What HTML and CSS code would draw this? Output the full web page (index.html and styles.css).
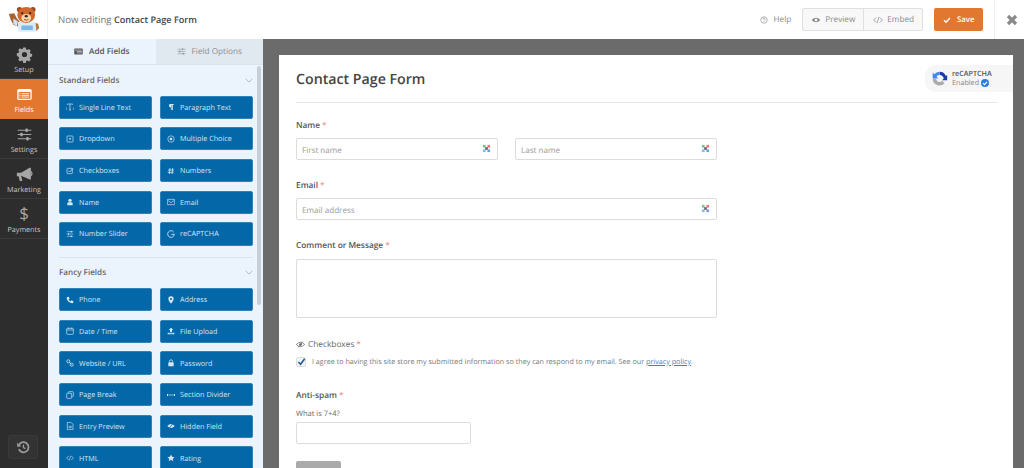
FILE: index.html
```html
<!DOCTYPE html>
<html lang="en">
<head>
<meta charset="utf-8">
<title>Now editing Contact Page Form</title>
<link rel="stylesheet" href="styles.css">
</head>
<body>
<header class="topbar">
  <div class="logo">
    <svg viewBox="0 0 36 30" width="32" height="27">
      <path d="M1 10l6-1 3 6 3 3-2 6-5-2-3-6z" fill="#a8622f"/>
      <path d="M6 15l5 3-1 6-4-3z" fill="#cfe6f6"/>
      <path d="M11 19h20l3 7-3 4H12z" fill="#d9ecf8"/>
      <path d="M31 20l3 1 1 5-3 3z" fill="#b5793c"/>
      <rect x="15" y="23" width="13" height="5" rx="1" fill="#7fb7e0"/>
      <circle cx="13" cy="5" r="3" fill="#9c4a24"/>
      <circle cx="28" cy="5" r="3" fill="#9c4a24"/>
      <ellipse cx="20.500" cy="11" rx="10" ry="9" fill="#d0682c"/>
      <ellipse cx="20.500" cy="14.500" rx="5.500" ry="4.500" fill="#f6d6a8"/>
      <circle cx="16" cy="9" r="1.200" fill="#3a2415"/>
      <circle cx="25" cy="9" r="1.200" fill="#3a2415"/>
      <ellipse cx="20.500" cy="12.500" rx="2" ry="1.300" fill="#3a2415"/>
      <path d="M18 16q2.500 2 5 0" stroke="#8b3c20" stroke-width="1" fill="none"/>
    </svg>
  </div>
  <div class="editing">Now editing <strong>Contact Page Form</strong></div>
  <div class="actions">
    <span class="help"><svg class="ic" viewBox="0 0 16 16"><circle cx="8" cy="8" r="6.500" fill="none" stroke="currentColor" stroke-width="1.300"/><path d="M6 6.300a2 2 0 1 1 3 1.800c-.7.400-1 .8-1 1.600" fill="none" stroke="currentColor" stroke-width="1.300"/><circle cx="8" cy="11.700" r=".9" fill="currentColor"/></svg>Help</span>
    <div class="btn-group">
      <span class="group-btn"><svg class="ic" viewBox="0 0 16 16"><path d="M1 8q7-7.500 14 0-7 7.500-14 0z" fill="currentColor"/><circle cx="8" cy="8" r="2.200" fill="#f8f8f8"/></svg>Preview</span>
      <span class="group-btn"><svg class="ic" viewBox="0 0 16 16"><path d="M5 4L1 8l4 4M11 4l4 4-4 4M9.500 3l-3 10" fill="none" stroke="currentColor" stroke-width="1.200"/></svg>Embed</span>
    </div>
    <span class="save"><svg class="ic" viewBox="0 0 16 16"><path d="M2 8.500l4 4 8-8.500" fill="none" stroke="currentColor" stroke-width="2.600"/></svg>Save</span>
  </div>
  <div class="close"><svg viewBox="0 0 12 12" width="12" height="12"><path d="M2 2l8 8M10 2l-8 8" stroke="#8a8a8a" stroke-width="3.200"/></svg></div>
</header>

<div class="workspace">
  <nav class="sidebar">
    <a class="nav-item"><svg class="nav-ic" viewBox="0 0 20 20"><path fill="currentColor" fill-rule="evenodd" d="M8.300 1h3.400l.5 2.400 1.600.7 2.100-1.300 2.300 2.300-1.300 2.100.7 1.600 2.400.5v3.400l-2.400.5-.7 1.600 1.300 2.100-2.300 2.300-2.100-1.300-1.600.7-.5 2.400H8.300l-.5-2.400-1.600-.7-2.100 1.300-2.300-2.300 1.300-2.100-.7-1.600L0 11.700V8.300l2.400-.5.7-1.600-1.300-2.100 2.300-2.300 2.100 1.300 1.600-.7zM10 6.600a3.400 3.400 0 1 0 0 6.800 3.400 3.400 0 0 0 0-6.800z" transform="translate(1 1) scale(.9)"/></svg>Setup</a>
    <a class="nav-item is-active"><svg class="nav-ic" viewBox="0 0 20 16"><rect width="17" height="13" x="1.500" y="1.500" rx="2" fill="#fff"/><rect x="3" y="5" width="14" height="8" fill="#e27730"/><path d="M6.500 7h9M6.500 9h9M6.500 11h9M3.800 7h1.500M3.800 9h1.500M3.800 11h1.500" stroke="#fff" stroke-width="1"/></svg>Fields</a>
    <a class="nav-item"><svg class="nav-ic" viewBox="0 0 20 16"><path d="M2 3h16M2 8h16M2 13h16" stroke="currentColor" stroke-width="1.400"/><rect x="11" y="1" width="3" height="4" rx="1" fill="currentColor"/><rect x="5" y="6" width="3" height="4" rx="1" fill="currentColor"/><rect x="12" y="11" width="3" height="4" rx="1" fill="currentColor"/></svg>Settings</a>
    <a class="nav-item"><svg class="nav-ic" viewBox="0 0 20 18"><path fill="currentColor" d="M1 7h5l10-6h1.500v14H16L6 10.500l1.500 6H4.500L3 11H1z"/><path d="M17.500 5.500q2.500 2.500 0 5" stroke="currentColor" fill="none" stroke-width="1.400"/></svg>Marketing</a>
    <a class="nav-item nav-pay"><span class="dollar">$</span>Payments</a>
    <span class="history"><svg viewBox="0 0 16 16" width="14" height="14"><path d="M3 6.500a5.800 5.800 0 1 1 .2 4" fill="none" stroke="#9a9a9a" stroke-width="2"/><path d="M1 3l.6 5 4.600-1z" fill="#9a9a9a"/><path d="M8.500 5v3.600l2.300 1.300" fill="none" stroke="#9a9a9a" stroke-width="1.500"/></svg></span>
  </nav>

  <aside class="panel">
    <div class="tabs">
      <span class="tab is-current"><svg class="ic" viewBox="0 0 16 12"><rect x=".5" y=".5" width="15" height="11" rx="1.500" fill="currentColor"/><path d="M2 3.500h12M5 6h9M5 8.500h9" stroke="#ebf3fc"/></svg>Add Fields</span>
      <span class="tab"><svg class="ic" viewBox="0 0 16 12"><path d="M1 2h14M1 6h14M1 10h14" stroke="currentColor"/><rect x="9" y=".5" width="2" height="3" fill="currentColor"/><rect x="4" y="4.500" width="2" height="3" fill="currentColor"/><rect x="10" y="8.500" width="2" height="3" fill="currentColor"/></svg>Field Options</span>
    </div>
    <section class="group">
      <h3 class="group-title">Standard Fields<svg class="chev" viewBox="0 0 10 6"><path d="M1 1l4 4 4-4" fill="none" stroke="currentColor" stroke-width="1"/></svg></h3>
      <div class="grid">
        <a class="field"><svg class="ic" viewBox="0 0 12 12"><path d="M2 2.500V1.500h8v1M6 1.500v9M4.500 10.500h3M1 7l-.5 1.500L1 10M11 7l.5 1.500L11 10" fill="none" stroke="currentColor"/></svg>Single Line Text</a>
        <a class="field"><svg class="ic" viewBox="0 0 12 12"><path d="M5 1.500h5v1.500H9v7.500H7.800V3H7v7.500H5.800V6.500A2.500 2.500 0 0 1 5 1.500z" fill="currentColor"/></svg>Paragraph Text</a>
        <a class="field"><svg class="ic" viewBox="0 0 12 12"><rect x="1.500" y="1.500" width="9" height="9" rx="1" fill="none" stroke="currentColor"/><path d="M4 5h4L6 7.500z" fill="currentColor"/></svg>Dropdown</a>
        <a class="field"><svg class="ic" viewBox="0 0 12 12"><circle cx="6" cy="6" r="4.800" fill="none" stroke="currentColor"/><circle cx="6" cy="6" r="2" fill="currentColor"/></svg>Multiple Choice</a>
        <a class="field"><svg class="ic" viewBox="0 0 12 12"><rect x="1.500" y="2" width="8" height="8" rx="1" fill="none" stroke="currentColor"/><path d="M3.500 5.500l2 2 5-5.500" fill="none" stroke="currentColor" stroke-width="1.200"/></svg>Checkboxes</a>
        <a class="field"><svg class="ic" viewBox="0 0 12 12"><path d="M4.500 1.500l-1 9M8.500 1.500l-1 9M1.500 4.500h9M1 8h9" fill="none" stroke="currentColor" stroke-width="1.200"/></svg>Numbers</a>
        <a class="field"><svg class="ic" viewBox="0 0 12 12"><circle cx="6" cy="3.500" r="2.500" fill="currentColor"/><path d="M2 11V8.500Q2 6.500 4 6.500h4Q10 6.500 10 8.500V11z" fill="currentColor"/></svg>Name</a>
        <a class="field"><svg class="ic" viewBox="0 0 12 12"><rect x=".5" y="2" width="11" height="8" rx="1" fill="none" stroke="currentColor"/><path d="M1 3.500l5 3.500 5-3.500" fill="none" stroke="currentColor"/></svg>Email</a>
        <a class="field"><svg class="ic" viewBox="0 0 12 12"><path d="M1 2.500h10M1 6h10M1 9.500h10" stroke="currentColor" stroke-width=".8"/><rect x="7" y="1.300" width="1.600" height="2.400" fill="currentColor"/><rect x="3" y="4.800" width="1.600" height="2.400" fill="currentColor"/><rect x="7" y="8.300" width="1.600" height="2.400" fill="currentColor"/></svg>Number Slider</a>
        <a class="field"><svg class="ic" viewBox="0 0 12 12"><path d="M10 3a5 5 0 1 0 1 3.500H6.500" fill="none" stroke="currentColor" stroke-width="1.300"/></svg>reCAPTCHA</a>
      </div>
    </section>
    <section class="group group-fancy">
      <h3 class="group-title">Fancy Fields<svg class="chev" viewBox="0 0 10 6"><path d="M1 1l4 4 4-4" fill="none" stroke="currentColor" stroke-width="1"/></svg></h3>
      <div class="grid">
        <a class="field"><svg class="ic" viewBox="0 0 12 12"><path d="M2 1.500l2-.5 1.500 3L4 5.200Q5 7.500 7 8l1.200-1.500 3 1.500-.5 2Q10 11 9 11 2 9.500 1 3q0-1 1-1.500z" fill="currentColor"/></svg>Phone</a>
        <a class="field"><svg class="ic" viewBox="0 0 12 12"><path fill="currentColor" fill-rule="evenodd" d="M6 .5a4 4 0 0 1 4 4Q10 7 6 11.500 2 7 2 4.500a4 4 0 0 1 4-4zM6 3a1.500 1.500 0 1 0 0 3 1.500 1.500 0 0 0 0-3z"/></svg>Address</a>
        <a class="field"><svg class="ic" viewBox="0 0 12 12"><rect x="1" y="2" width="10" height="9" rx="1" fill="none" stroke="currentColor"/><path d="M1 4.500h10M3.500 .8v2M8.500 .8v2" stroke="currentColor"/></svg>Date / Time</a>
        <a class="field"><svg class="ic" viewBox="0 0 12 12"><path d="M6 1l3.500 3.500H7.500V8h-3V4.500h-2zM1 8.500h2.500v1h5v-1H11V11H1z" fill="currentColor"/></svg>File Upload</a>
        <a class="field"><svg class="ic" viewBox="0 0 12 12"><path d="M5 5L8 8" stroke="currentColor" stroke-width="1.400"/><circle cx="3.500" cy="3.500" r="2.300" fill="none" stroke="currentColor" stroke-width="1.200"/><circle cx="8.500" cy="8.500" r="2.300" fill="none" stroke="currentColor" stroke-width="1.200"/></svg>Website / URL</a>
        <a class="field"><svg class="ic" viewBox="0 0 12 12"><rect x="2" y="5" width="8" height="6" rx="1" fill="currentColor"/><path d="M3.700 5V3.500a2.300 2.300 0 0 1 4.600 0V5" fill="none" stroke="currentColor" stroke-width="1.200"/></svg>Password</a>
        <a class="field"><svg class="ic" viewBox="0 0 12 12"><rect x="3.500" y="1" width="7.500" height="7.500" rx="1" fill="none" stroke="currentColor"/><rect x="1" y="3.500" width="7.500" height="7.500" rx="1" fill="#0367a8" stroke="currentColor"/></svg>Page Break</a>
        <a class="field"><svg class="ic" viewBox="0 0 12 12"><path d="M2 6h8" stroke="currentColor"/><path d="M0 4.500h1.500v3H0zM10.500 4.500H12v3h-1.500z" fill="currentColor"/></svg>Section Divider</a>
        <a class="field"><svg class="ic" viewBox="0 0 12 12"><path d="M2 .5h5.500L10.500 3.500v8H2z" fill="none" stroke="currentColor"/><path d="M4 6.500h4.500M4 8.500h4.500" stroke="currentColor"/></svg>Entry Preview</a>
        <a class="field"><svg class="ic" viewBox="0 0 12 12"><path d="M.5 6q5.500-6 11 0-5.500 6-11 0z" fill="currentColor"/><path d="M3 10L9 2" stroke="#0367a8" stroke-width="1.200"/></svg>Hidden Field</a>
        <a class="field"><svg class="ic" viewBox="0 0 12 12"><path d="M4 3L1 6l3 3M8 3l3 3-3 3M7 2.500l-2 7" fill="none" stroke="currentColor" stroke-width=".9"/></svg>HTML</a>
        <a class="field"><svg class="ic" viewBox="0 0 12 12"><path d="M6 .8l1.600 3.500 3.900.4-2.900 2.500.9 3.800L6 8.800 2.500 11l.9-3.800L.5 4.700l3.900-.4z" fill="currentColor"/></svg>Rating</a>
      </div>
    </section>
    <span class="scroll-thumb"></span>
  </aside>

  <main class="preview">
    <div class="card">
      <div class="badge">
        <svg viewBox="0 0 20 20" width="17" height="17"><path d="M10 2a8 8 0 0 1 7.500 5.200l1.500-1.200V12h-6l2-2a5.800 5.800 0 0 0-5-4.500z" fill="#1c3aa9"/><path d="M2 3l2 2a8 8 0 0 1 6-3v4a4.800 4.800 0 0 0-3.500 1.500L8.500 10H2z" fill="#4285f4"/><path d="M2 10h4q.5 4 4 4 2 0 3-1.500l3 3A8 8 0 0 1 2 10z" fill="#ababab"/></svg>
        <div class="badge-text"><b>reCAPTCHA</b><span>Enabled <i class="tick"><svg viewBox="0 0 8 8" width="8" height="8"><path d="M2 4l1.500 1.700L6 2.800" fill="none" stroke="#fff" stroke-width="1.100"/></svg></i></span></div>
      </div>
      <h1 class="form-title">Contact Page Form</h1>
      <div class="form-body">
        <div class="row-field row-name">
          <label class="lbl">Name <em>*</em></label>
          <div class="pair">
            <div class="input"><span>First name</span><svg class="key" viewBox="0 0 10 10"><path d="M1 1h3v3H1z" fill="#7cc08a"/><path d="M6 1h3v3H6z" fill="#ee7a72"/><path d="M1 6h3v3H1z" fill="#7dbdf0"/><path d="M6 6h3v3H6z" fill="#6a9fe0"/><path d="M3.500 3.500h3v3h-3z" fill="#667"/></svg></div>
            <div class="input"><span>Last name</span><svg class="key" viewBox="0 0 10 10"><path d="M1 1h3v3H1z" fill="#7cc08a"/><path d="M6 1h3v3H6z" fill="#ee7a72"/><path d="M1 6h3v3H1z" fill="#7dbdf0"/><path d="M6 6h3v3H6z" fill="#6a9fe0"/><path d="M3.500 3.500h3v3h-3z" fill="#667"/></svg></div>
          </div>
        </div>
        <div class="row-field row-email">
          <label class="lbl">Email <em>*</em></label>
          <div class="input input-wide"><span>Email address</span><svg class="key" viewBox="0 0 10 10"><path d="M1 1h3v3H1z" fill="#7cc08a"/><path d="M6 1h3v3H6z" fill="#ee7a72"/><path d="M1 6h3v3H1z" fill="#7dbdf0"/><path d="M6 6h3v3H6z" fill="#6a9fe0"/><path d="M3.500 3.500h3v3h-3z" fill="#667"/></svg></div>
        </div>
        <div class="row-field row-message">
          <label class="lbl">Comment or Message <em>*</em></label>
          <div class="textarea"></div>
        </div>
        <div class="row-field row-check">
          <label class="lbl lbl-plain"><svg class="ic" viewBox="0 0 12 12"><path d="M.5 6q5.500-6 11 0-5.500 6-11 0z" fill="none" stroke="currentColor"/><circle cx="6" cy="6" r="1.800" fill="currentColor"/><path d="M3 10L9 2" stroke="currentColor"/></svg>Checkboxes <em>*</em></label>
          <div class="agree"><span class="box"><svg viewBox="0 0 10 10" width="9" height="9"><path d="M1.500 5.500l2.500 2.500 4.500-6" fill="none" stroke="#1a5fa8" stroke-width="1.800"/></svg></span><span>I agree to having this site store my submitted information so they can respond to my email. See our <a class="link">privacy policy</a>.</span></div>
        </div>
        <div class="row-field row-spam">
          <label class="lbl">Anti-spam <em>*</em></label>
          <div class="question">What is 7+4?</div>
          <div class="input input-small"></div>
        </div>
        <div class="submit"></div>
      </div>
    </div>
  </main>
</div>
</body>
</html>
```

FILE: styles.css
```css
* { box-sizing: border-box; }
html, body { margin: 0; height: 100%; overflow: hidden; }
body { font-family: "Open Sans", "Liberation Sans", sans-serif; color: #444; background: #fff; display: flex; flex-direction: column; text-rendering: geometricPrecision; }
svg { display: block; flex: none; }
.ic { width: 9px; height: 9px; margin-right: 6px; }

.topbar { height: 39px; flex: none; display: flex; align-items: center; background: #fff; }
.logo { width: 48px; height: 39px; padding-bottom: 3px; display: flex; align-items: center; justify-content: center; border-right: 1px solid #eee; }
.editing { margin-left: 10px; font-size: 9.600px; color: #777; }
.editing strong { color: #444; font-weight: 600; font-size: 9.100px; }
.actions { margin-left: auto; display: flex; align-items: center; font-size: 8.200px; color: #8a8a8a; }
.help { display: flex; align-items: center; margin-right: 11px; }
.help .ic { width: 8px; height: 8px; margin-right: 6px; }
.btn-group { display: flex; height: 23px; border: 1px solid #e0e0e0; border-radius: 2px; background: #f8f8f8; margin-right: 11px; }
.group-btn { display: flex; align-items: center; padding: 0 8px; }
.group-btn .ic { width: 10px; height: 10px; margin-right: 4px; }
.group-btn + .group-btn { border-left: 1px solid #e0e0e0; padding-left: 9px; }
.save { display: flex; align-items: center; height: 23px; width: 49px; padding-left: 9px; background: #e27730; color: #fff; font-size: 7.800px; font-weight: 600; border-radius: 2px; }
.save .ic { width: 8px; height: 8px; }
.close { width: 30px; height: 39px; margin-left: 11px; padding-left: 4px; display: flex; align-items: center; justify-content: center; border-left: 1px solid #eee; }

.workspace { flex: 1; display: flex; min-height: 0; }
.sidebar { position: relative; width: 48px; flex: none; background: #2d2d2d; color: #a6a6a6; font-size: 7.200px; }
.nav-item { height: 40px; display: flex; flex-direction: column; align-items: center; justify-content: flex-end; padding-bottom: 3.500px; border-bottom: 1px solid #3a3a3a; color: #c8c8c8; }
.nav-ic { width: 17px; height: 17px; margin-bottom: 2px; color: #a6a6a6; }
.is-active { background: #e27730; color: #fff; border-bottom-color: #e27730; }
.dollar { font-size: 17px; color: #a6a6a6; }
.history { position: absolute; left: 8px; bottom: 9px; width: 30px; height: 24px; display: flex; align-items: center; justify-content: center; background: #333; border: 1px solid #3a3a3a; border-radius: 2px; }

.panel { position: relative; width: 215px; flex: none; background: #ebf3fc; overflow: hidden; }
.tabs { display: flex; height: 25.500px; font-size: 8.200px; font-weight: 600; }
.tab { flex: 1; display: flex; align-items: center; justify-content: center; padding-top: 1px; background: #e0e8f0; color: #8a8f94; border-bottom: 1px solid #dbe3ec; font-weight: 400; }
.tab.is-current { background: #ebf3fc; color: #555; font-weight: 600; }
.group { padding: 0 10px 11px 11px; }
.group-title { height: 31px; margin: 0; display: flex; align-items: center; justify-content: space-between; font-size: 8.100px; font-weight: 600; color: #666; }
.group-fancy .group-title { height: 30.500px; }
.group-fancy::before { content: ""; display: block; height: 1px; background: #dbe3ec; }
.chev { width: 8px; height: 5px; color: #a0a8b0; }
.grid { display: grid; grid-template-columns: 93px 93px; column-gap: 8px; grid-auto-rows: 23.300px; row-gap: 8.400px; }
.field { display: flex; align-items: center; padding: 1px 0 0 6px; background: #0367a8; border-radius: 2px; color: #d6e7f4; font-size: 7.200px; white-space: nowrap; border: 1px solid #2f83ba; }
.field .ic { width: 8px; height: 8px; margin: -1px 5px 0 0; }
.scroll-thumb { position: absolute; left: 209px; top: 27px; width: 4px; height: 239px; background: #c6ced8; border-radius: 2px; }

.preview { flex: 1; background: #6b6b6b; padding: 16px 11px 0 16px; overflow: hidden; }
.card { position: relative; background: #fff; height: 100%; padding: 0 15px 0 17px; overflow: hidden; }
.badge { position: absolute; top: 10px; right: 0; width: 88px; height: 27px; display: flex; align-items: center; gap: 4px; padding-left: 6px; background: #f6f6f6; border-radius: 11px 0 0 11px; }
.badge-text { display: flex; flex-direction: column; font-size: 7.200px; line-height: 9px; color: #888; }
.badge-text b { font-weight: 600; color: #555; }
.badge-text span { display: flex; align-items: center; gap: 2px; }
.tick { width: 8px; height: 8px; display: block; border-radius: 50%; background: #2c7be5; }
.form-title { margin: 0; height: 48px; padding-top: 1px; display: flex; align-items: center; font-size: 14.200px; font-weight: 600; color: #444; border-bottom: 1px solid #e8e8e8; }
.form-body { width: 421px; }
.row-field { display: block; }
.lbl { display: flex; align-items: center; gap: 2px; height: 12px; font-size: 8.300px; font-weight: 600; color: #555; }
.lbl em { color: #e88; font-style: normal; font-weight: 400; }
.lbl-plain { font-weight: 400; color: #666; }
.lbl-plain .ic { margin-right: 1px; }
.row-name { padding-top: 16px; }
.row-name .lbl { margin-bottom: 7px; }
.pair { display: flex; gap: 17px; }
.input { flex: 1; height: 22px; display: flex; align-items: center; justify-content: space-between; padding: 2px 6px 0 5px; background: #fff; border: 1px solid #dcdcdc; border-radius: 2px; font-size: 8.100px; color: #999; }
.key { width: 9px; height: 9px; margin-top: -3px; }
.row-email { padding-top: 19px; }
.row-email .lbl { margin-bottom: 7px; }
.row-message { padding-top: 19px; }
.row-message .lbl { margin-bottom: 8px; }
.textarea { height: 59px; background: #fff; border: 1px solid #dcdcdc; border-radius: 2px; }
.row-check { padding-top: 20px; }
.agree { display: flex; align-items: center; margin-top: 6px; font-size: 7.200px; color: #777; white-space: nowrap; }
.agree > span:last-child { padding-top: 1px; }
.box { width: 10px; height: 10px; margin-right: 6px; display: flex; align-items: center; justify-content: center; background: #f4f4f4; border: 1px solid #ddd; border-radius: 2px; }
.link { color: #3a87c7; text-decoration: underline; }
.row-spam { padding-top: 22px; }
.question { margin-top: 8px; font-size: 7.500px; line-height: 11px; color: #666; }
.input-small { width: 175px; flex: none; margin-top: 2px; }
.submit { width: 45px; height: 30px; margin-top: 17px; background: #aaa; border-radius: 2px; }
```
